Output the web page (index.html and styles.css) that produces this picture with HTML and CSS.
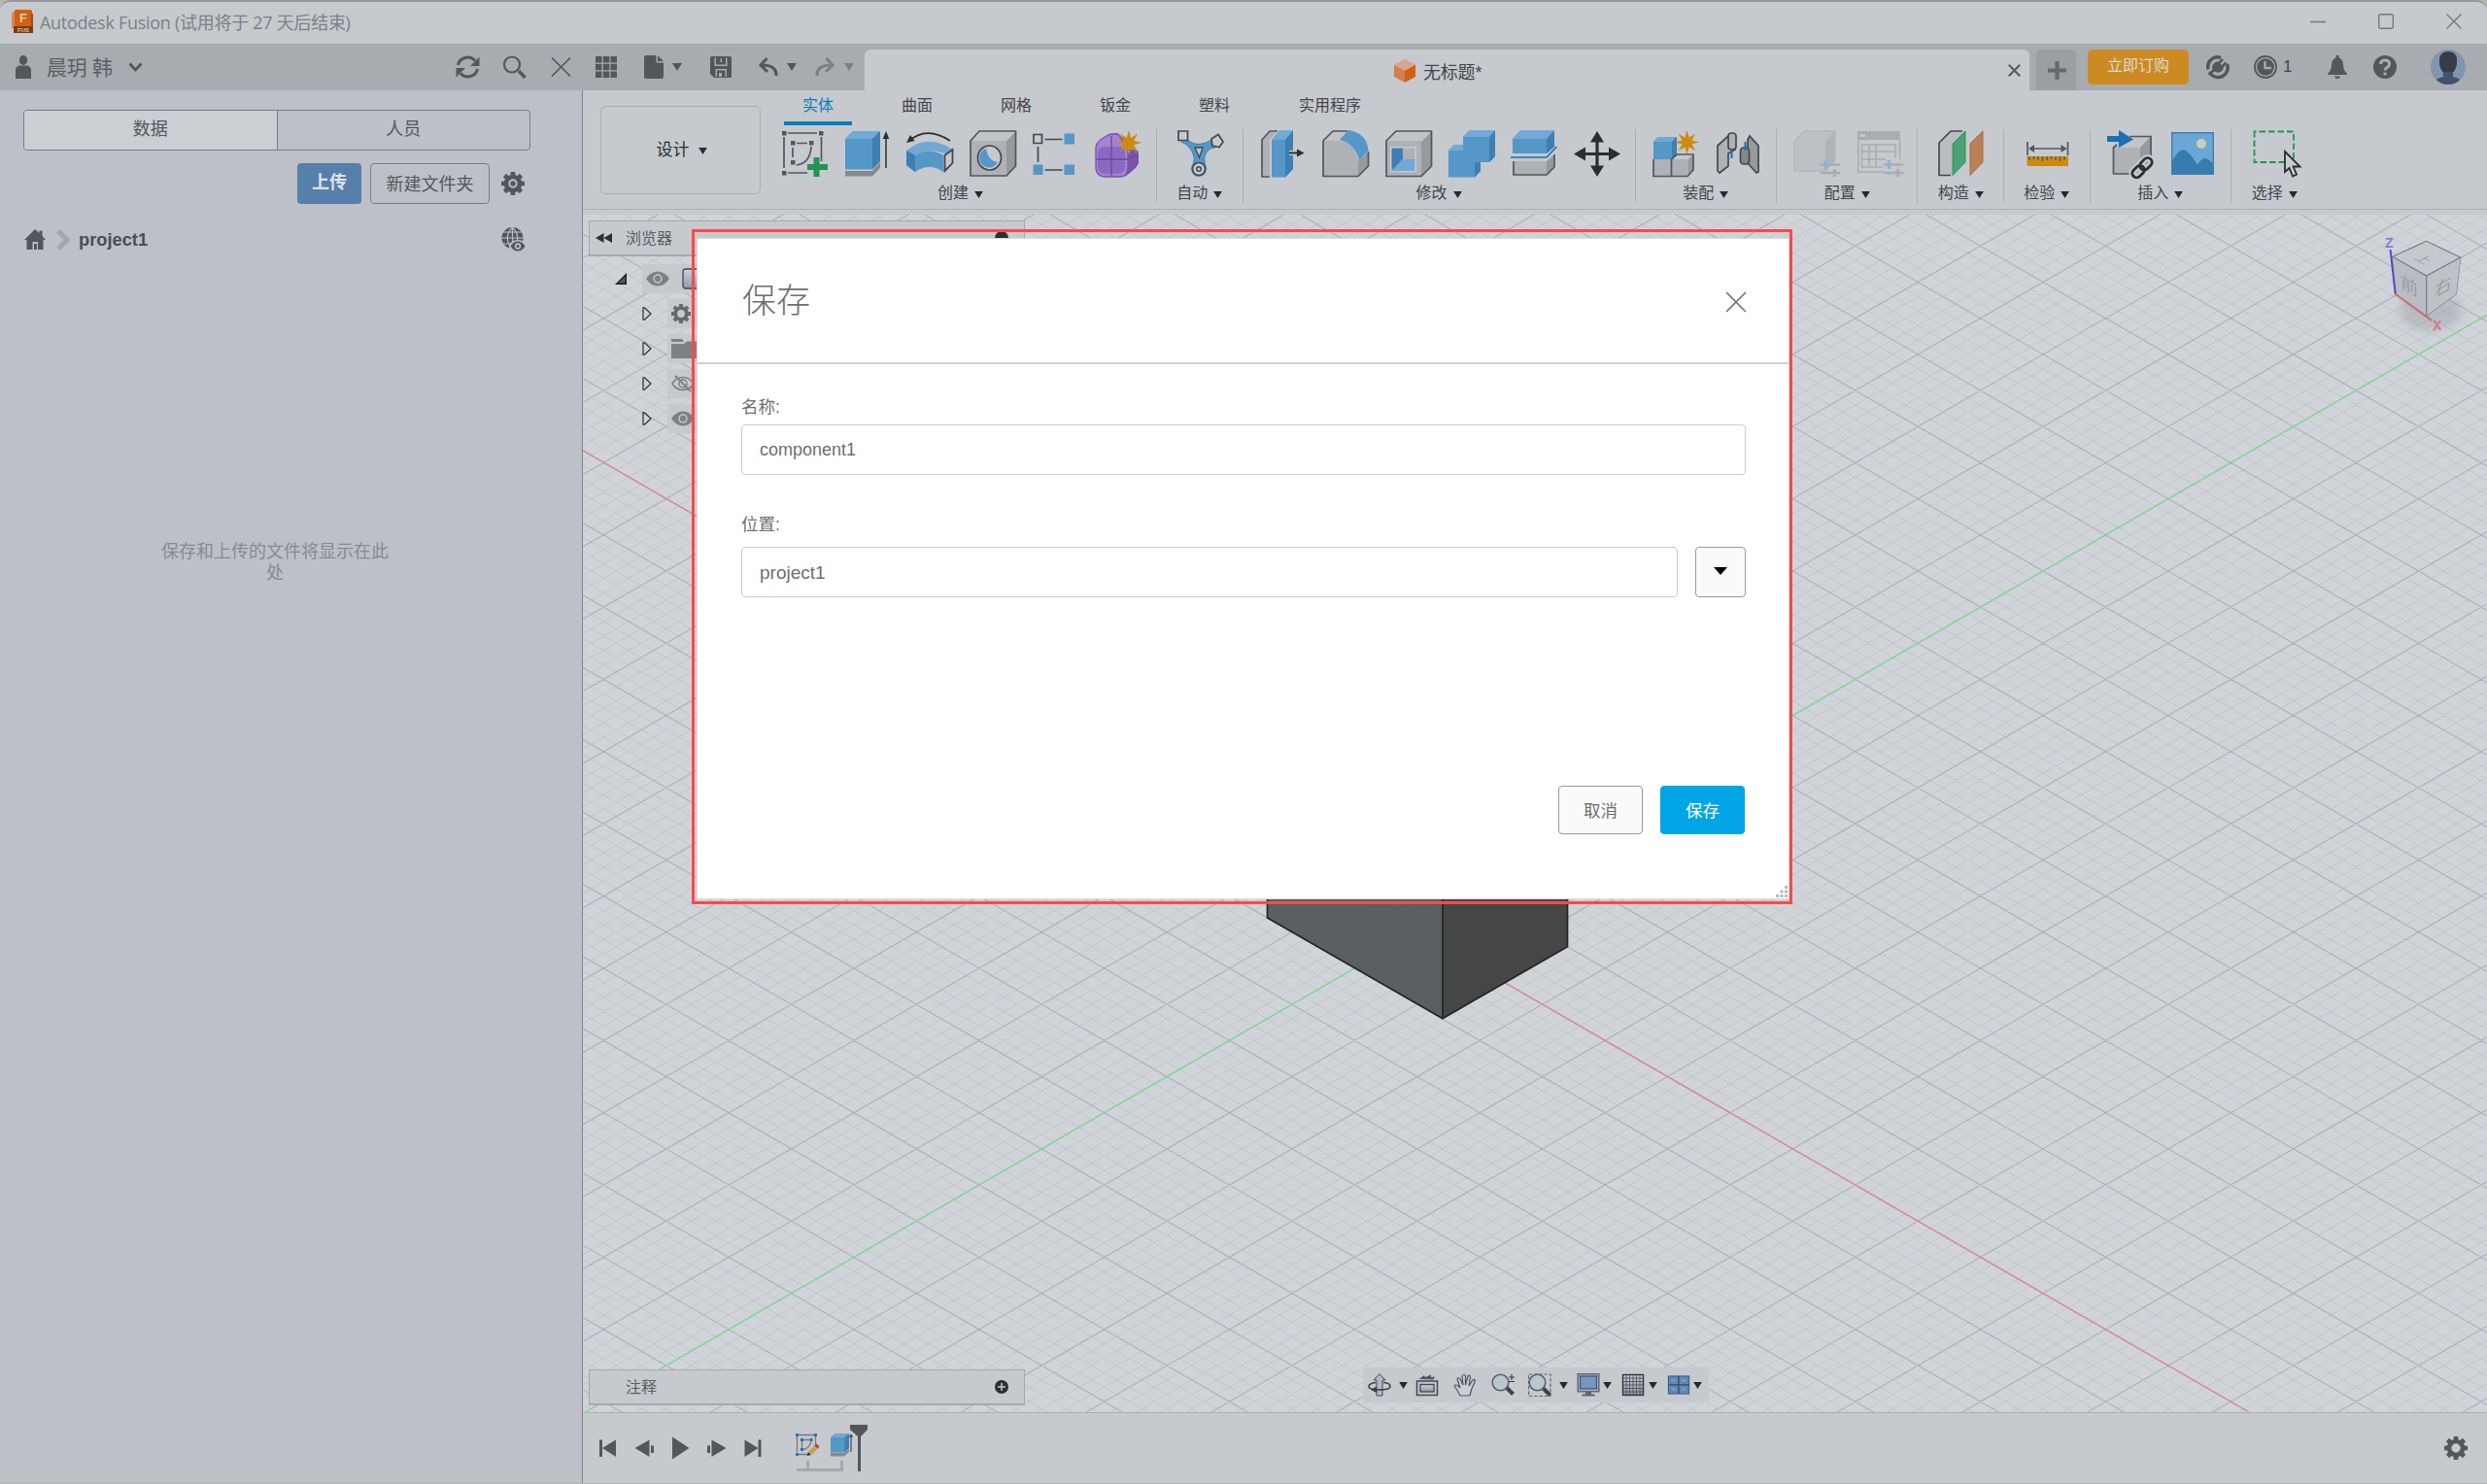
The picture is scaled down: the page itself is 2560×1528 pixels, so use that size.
FILE: index.html
```
<!DOCTYPE html>
<html lang="zh-CN">
<head>
<meta charset="utf-8">
<title>Autodesk Fusion</title>
<link rel="stylesheet" href="styles.css">
</head>
<body>
<svg class="defs" aria-hidden="true">
  <defs>
    <linearGradient id="metal" x1="0" y1="0" x2="0" y2="1"><stop offset="0" stop-color="#ccd2da"/><stop offset="1" stop-color="#8e99a8"/></linearGradient>
    <linearGradient id="steel" x1="0" y1="0" x2="0" y2="1"><stop offset="0" stop-color="#47494c"/><stop offset=".4" stop-color="#464646"/></linearGradient>
    <linearGradient id="face" x1="1" y1="0" x2="0" y2="1"><stop offset="0" stop-color="#5c635f"/><stop offset=".5" stop-color="#595f62"/></linearGradient>
    <linearGradient id="sky" x1="0" y1="0" x2="0" y2="1"><stop offset="0" stop-color="#8494ad"/><stop offset="1" stop-color="#8094b4"/></linearGradient>
    <symbol id="gear" viewBox="0 0 24 24"><circle cx="12" cy="12" r="7" fill="none" stroke="currentColor" stroke-width="4.600"/><path d="M12 0V5M12 19V24M0 12H5M19 12H24M3.500 3.500L7 7M17 17L20.500 20.500M3.500 20.500L7 17M17 7L20.500 3.500" stroke="currentColor" stroke-width="4.600"/></symbol>
    <symbol id="eye" viewBox="0 0 24 18"><path d="M0 9Q5 1.500 12 1.500T24 9Q19 16.500 12 16.500T0 9Z" fill="currentColor"/><circle cx="12" cy="9" r="4.700" fill="#c6c9ce"/><circle cx="12" cy="9" r="3.200" fill="currentColor"/></symbol>
    <symbol id="down" viewBox="0 0 10 8"><path d="M0 0H10L5 8Z" fill="currentColor"/></symbol>
    <symbol id="open" viewBox="0 0 10 14"><path d="M1 .8V13.200H2.500L9 7 2.500 .8Z" fill="none" stroke="#2b2e32" stroke-width="1.200"/></symbol>
    <symbol id="plus" viewBox="0 0 14 14"><circle cx="7" cy="7" r="7" fill="#2c3035"/><path d="M7 3V11M3 7H11" stroke="#c6c9ce" stroke-width="1.600"/></symbol>
    <symbol id="dot" viewBox="0 0 14 14"><circle cx="7" cy="7" r="7" fill="#2c3035"/></symbol>
    <symbol id="sliders" viewBox="0 0 21 17"><path d="M0 4.500H21M0 13H21" stroke="#a9adb2" stroke-width="2.400"/><path d="M6 0V9" stroke="#8fb3cf" stroke-width="3.400"/><path d="M15 9V17" stroke="#a9adb2" stroke-width="3.400"/></symbol>
    <symbol id="star" viewBox="0 0 24 24"><path d="M12 0L14 7.200 20.500 3.500 16.800 10 24 12 16.800 14 20.500 20.500 14 16.800 12 24 10 16.800 3.500 20.500 7.200 14 0 12 7.200 10 3.500 3.500 10 7.200Z" fill="#cd8b10"/></symbol>
    <symbol id="extrude" viewBox="0 0 48 48"><path d="M1 42H29L37 33V39L29 47.500H1Z" fill="#85898e"/><path d="M1 9L9 1H31V32L24 40H1Z" fill="#5597c7"/><path d="M1 9L9 1H31L24 9Z" fill="#72a8d5"/><path d="M24 9L31 1V32L24 40Z" fill="#3d7fb2"/><path d="M36 4V39" stroke="#2a2d31" stroke-width="1.500"/><path d="M36 1L32.500 9H39.500Z" fill="#2a2d31"/></symbol>
  </defs>
</svg>

<div class="window">
  <header class="titlebar">
    <svg class="logo" viewBox="0 0 22 24"><path d="M0 4L4 0V20L0 19Z" fill="#d58a55"/><rect x="3" width="18" height="17" rx="2" fill="#d15f10"/><path d="M2 17H22V24H2Z" fill="#7c3a14"/><path d="M20 4H22V17H20Z" fill="#a04a12"/><text x="8" y="13" class="logo-f">F</text><text x="6" y="22.500" class="logo-s">FUS</text></svg>
    <span class="title">Autodesk Fusion (试用将于 27 天后结束)</span>
    <div class="winbtns">
      <svg viewBox="0 0 16 16"><path d="M0 8.500H16"/></svg>
      <svg viewBox="0 0 16 16"><rect x=".7" y=".7" width="14.600" height="14.600" rx="1.500"/></svg>
      <svg viewBox="0 0 16 16"><path d="M.5 .5L15.500 15.500M15.500 .5L.5 15.500"/></svg>
    </div>
  </header>

  <div class="topbar">
    <div class="user">
      <svg width="16" height="24" viewBox="0 0 16 24"><ellipse cx="8" cy="5" rx="4.200" ry="5" fill="#53565b"/><path d="M0 24V16Q0 10.500 5 10.500H11Q16 10.500 16 16V24Z" fill="#53565b"/></svg>
      <span class="name">晨玥 韩</span>
      <svg width="15" height="10" viewBox="0 0 15 10"><path d="M1.500 1.500L7.500 8 13.500 1.500" fill="none" stroke="#53565b" stroke-width="2.800"/></svg>
    </div>
    <div class="panel-tools">
      <svg viewBox="0 0 25 24"><path d="M2.500 10A10 9.500 0 0 1 20 5.500M22.500 14A10 9.500 0 0 1 5 18.500" fill="none" stroke="#53565b" stroke-width="3"/><path d="M24.500 1.500V11H15ZM.5 22.500V13H10Z" fill="#53565b"/></svg>
      <svg viewBox="0 0 25 24"><circle cx="10" cy="9.500" r="8" fill="none" stroke="#53565b" stroke-width="2.200"/><path d="M17 16L23.500 23" stroke="#53565b" stroke-width="3.400"/></svg>
      <svg viewBox="0 0 25 24"><path d="M3 2.500L22 21.500M22 2.500L3 21.500" stroke="#53565b" stroke-width="1.700"/></svg>
    </div>
    <div class="quick">
      <svg width="22" height="22" viewBox="0 0 22 22"><path d="M0 0H6.500V6.500H0ZM7.800 0H14.300V6.500H7.800ZM15.500 0H22V6.500H15.500ZM0 7.800H6.500V14.300H0ZM7.800 7.800H14.300V14.300H7.800ZM15.500 7.800H22V14.300H15.500ZM0 15.500H6.500V22H0ZM7.800 15.500H14.300V22H7.800ZM15.500 15.500H22V22H15.500Z" fill="#53565b"/></svg>
      <svg width="20" height="24" viewBox="0 0 20 24"><path d="M0 2Q0 0 2 0H12.500V7.500H20V22Q20 24 18 24H2Q0 24 0 22ZM14 0L20 6H14Z" fill="#53565b"/></svg>
      <svg width="10" height="8" class="dk"><use href="#down"/></svg>
      <svg width="22" height="22" viewBox="0 0 22 22"><path d="M0 1.500Q0 0 1.500 0H20.500Q22 0 22 1.500V20.500Q22 22 20.500 22H4L0 18Z" fill="#53565b"/><path d="M4.500 1.500H6V8.500H16V1.500H17.500V10H4.500ZM10.500 2H12V6H10.500ZM5.500 13H17V21H15.500V14.500H7V21H5.500ZM9 17H12V21H9Z" fill="#a8abb0"/></svg>
      <svg width="20" height="20" viewBox="0 0 20 20"><path d="M18 19Q18.500 8 3 8" fill="none" stroke="#53565b" stroke-width="3.200"/><path d="M8.500 1L2 8L9 15" fill="none" stroke="#53565b" stroke-width="3"/></svg>
      <svg width="10" height="8" class="dk"><use href="#down"/></svg>
      <svg width="20" height="20" viewBox="0 0 20 20"><path d="M2 19Q1.500 8 17 8" fill="none" stroke="#7c8085" stroke-width="3.200"/><path d="M11.500 1L18 8L11 15" fill="none" stroke="#7c8085" stroke-width="3"/></svg>
      <svg width="10" height="8" class="lt"><use href="#down"/></svg>
    </div>
    <div class="doctab">
      <div class="doc"><svg width="22" height="24" viewBox="0 0 22 24"><path d="M0 5.500L11 11.500V24L0 18Z" fill="#d27f4a"/><path d="M22 5.500L11 11.500V24L22 18Z" fill="#d15f10"/><path d="M11 0L22 5.500 11 11.500 0 5.500Z" fill="#d3a88f"/></svg><span>无标题*</span></div>
      <svg width="13" height="13" viewBox="0 0 13 13"><path d="M.8 .8L12.200 12.200M12.200 .8L.8 12.200" stroke="#5a5d62" stroke-width="2.300"/></svg>
    </div>
    <div class="newtab"><svg width="19" height="19" viewBox="0 0 19 19"><path d="M9.500 0V19M0 9.500H19" stroke="#65686d" stroke-width="4.200"/></svg></div>
    <div class="order">立即订购</div>
    <div class="status">
      <svg viewBox="0 0 24 24"><path d="M15 2.500A10 10 0 0 0 2 14.500M4.500 19A10 10 0 0 0 21.500 9" fill="none" stroke="#53565b" stroke-width="3.400"/><path d="M7 9.500Q10 5 13.500 7.500L17 11Q19 15 14.500 17 11.500 18.500 8.500 16.500L3.500 21 1.500 18.500 6.500 14.500Q5.500 12 7 9.500Z" fill="#53565b"/><path d="M12.500 8.500L17 4M16 12L20.500 7.500" stroke="#53565b" stroke-width="2.600"/></svg>
      <svg viewBox="0 0 24 24"><circle cx="12" cy="12" r="11" fill="none" stroke="#53565b" stroke-width="1.800"/><circle cx="12" cy="12" r="8.800" fill="#53565b"/><path d="M11.500 6V13H18" fill="none" stroke="#a8abb0" stroke-width="2.300"/></svg>
      <span>1</span>
      <svg viewBox="0 0 24 24"><path d="M10.500 0H13.500V2.500Q18 4 18 10 18 15 22 19V20H2V19Q6 15 6 10 6 4 10.500 2.500ZM9 21.500H15Q14.500 24 12 24T9 21.500Z" fill="#53565b"/></svg>
      <svg viewBox="0 0 24 24"><circle cx="12" cy="12" r="12" fill="#53565b"/><path d="M7.500 9Q7.500 5 12 5T16.500 9Q16.500 11 14 12.500 12 13.800 12 15.500" fill="none" stroke="#a8abb0" stroke-width="3"/><path d="M10.500 17.500H13.500V20.500H10.500Z" fill="#a8abb0"/></svg>
      <svg class="avatar" viewBox="0 0 36 36"><clipPath id="av"><circle cx="18" cy="18" r="18"/></clipPath><g clip-path="url(#av)"><rect width="36" height="36" fill="url(#sky)"/><path d="M9 12Q9 2 18 2T27 12Q27 19 23 24V28Q32 30 34 36H2Q4 30 13 28V24Q9 19 9 12Z" fill="#43516a"/><path d="M9 12Q9 2 18 2T27 12Q27 19 23 23H13Q9 19 9 12Z" fill="#373d48"/></g></svg>
    </div>
  </div>

  <main class="main">
    <aside class="side">
      <div class="seg"><div class="on">数据</div><div>人员</div></div>
      <div class="actions">
        <div class="upload">上传</div><div class="newfolder">新建文件夹</div>
        <svg width="24" height="24" class="dk"><use href="#gear"/><circle cx="12" cy="12" r="2.700" fill="#53565b"/></svg>
      </div>
      <div class="crumb">
        <svg width="22" height="21" viewBox="0 0 22 21"><path d="M11 0L15.500 4V1.500H18.500V7L22 11H19.500V21H14V13H8.500V21H2.500V11H0Z" fill="#53565b"/><path d="M10 15H13V21H10Z" fill="#53565b"/></svg>
        <svg width="15" height="20" viewBox="0 0 15 20"><path d="M2 1L11 10 2 19" fill="none" stroke="#a2a6ab" stroke-width="5"/></svg>
        <b>project1</b>
        <svg class="globe" width="25" height="25" viewBox="0 0 25 25"><circle cx="11.500" cy="11" r="11" fill="#53565b"/><path d="M0 11H23M2 5H21M2 17H21M11.500 0V22M11.500 0Q1 11 11.500 22Q22 11 11.500 0" fill="none" stroke="#bdc0c6" stroke-width="1.100"/><ellipse cx="17" cy="19.500" rx="9" ry="6.500" fill="#bdc0c6"/><path d="M9.500 19.500Q12.500 14.500 17 14.500T24.500 19.500Q21.500 24.500 17 24.500T9.500 19.500Z" fill="#53565b"/><circle cx="17" cy="19.500" r="3.200" fill="#bdc0c6"/><circle cx="17" cy="19.500" r="1.600" fill="#53565b"/></svg>
      </div>
      <p class="empty">保存和上传的文件将显示在此<br>处</p>
    </aside>

    <section class="work">
      <div class="ribbon">
        <div class="design">设计<svg width="10" height="8"><use href="#down"/></svg></div>
        <div class="ribbon-body">
          <nav class="tabs"><span class="active">实体</span><span>曲面</span><span>网格</span><span>钣金</span><span>塑料</span><span class="wide">实用程序</span></nav>
          <div class="groups">
            <div class="group g6">
              <div class="icons">
                <svg viewBox="0 0 48 48"><path d="M3 7V39M7 3H37M41.500 7V32M7 44H27M12 18V28M16 13.500H27M31 17Q30 34 16 36" fill="none" stroke="#53565b" stroke-width="1.700"/><path d="M1 1H5.500V5.500H1ZM39 1H43.500V5.500H39ZM1 42H5.500V46.500H1ZM10 11H14.500V15.500H10ZM29 11H33.500V15.500H29ZM10 31H14.500V35.500H10Z" fill="#53565b"/><path d="M36.500 28V48M27 38H48" stroke="#219452" stroke-width="6"/></svg>
                <svg viewBox="0 0 48 48"><path d="M1 42H29L37 33V39L29 47.500H1Z" fill="#85898e"/><path d="M1 9L9 1H37V32L29 40.500H1Z" fill="#5597c7"/><path d="M1 9L9 1H37L29 9Z" fill="#72a8d5"/><path d="M29 9L37 1V32L29 40.500Z" fill="#3d7fb2"/><path d="M43 5V39" stroke="#2a2d31" stroke-width="1.500"/><path d="M43 1L39.700 9H46.300Z" fill="#2a2d31"/></svg>
                <svg viewBox="0 0 48 48"><path d="M2 12Q20-5 45 11" fill="none" stroke="#2a2d31" stroke-width="1.700"/><path d="M0 13L4 5 8.500 11Z" fill="#2a2d31"/><path d="M0 21Q22 3 48 20L41 25Q24 17 9 26Z" fill="#72a8d5"/><path d="M0 21L9 26Q24 17 38 26V43Q24 33 9 43L0 36Z" fill="#5597c7"/><path d="M0 21L9 26V43L0 36Z" fill="#3d7fb2"/><path d="M39.500 26L47.500 20V34L39.500 42Z" fill="#c6c9ce" stroke="#44474c" stroke-width="1.800"/></svg>
                <svg viewBox="0 0 48 48"><path d="M1 11L10 1H48L38 11Z" fill="#c2c4c8"/><path d="M38 11L48 1V37L38 47Z" fill="#96999e"/><path d="M1 11H38V47H1Z" fill="#aeb1b5"/><path d="M1 11L10 1H47.500V37L38 47H1Z" fill="none" stroke="#53565b" stroke-width="1.700"/><ellipse cx="20.500" cy="28.500" rx="12" ry="12.500" fill="#c6c9ce" stroke="#44474c" stroke-width="1.700"/><path d="M17 19A10 10 0 1 0 29 33Q19 32 17 19Z" fill="#5597c7"/></svg>
                <svg viewBox="0 0 48 48"><path d="M1 4.500H9.500V13.500H1Z" fill="none" stroke="#44474c" stroke-width="1.700"/><path d="M32.500 3.500H43V14.500H32.500ZM.5 35.500H10.500V46H.5ZM32.500 35.500H43V46H32.500Z" fill="#5597c7"/><path d="M12.500 9.500H30.500M12.500 41H30.500M5.500 17V33" stroke="#44474c" stroke-width="1.700"/></svg>
                <svg viewBox="0 0 48 48"><path d="M1 17Q2 11 12 6 16 3 24 4L44 22V32Q42 40 34 46 32 48 26 48H12Q1 48 1 38Z" fill="#a483d2"/><path d="M34 20L45 24V34Q42 41 34 44Z" fill="#7a55ad"/><rect x="3" y="17" width="28" height="28" rx="7" fill="#8b68c3"/><path d="M17 6V47M1 30H34L44 25" fill="none" stroke="#6a4a9a" stroke-width="1.300"/><path d="M1 17Q2 11 12 6 16 3 24 4L34 18V38Q34 48 26 48H12Q1 48 1 38ZM34 20L44 22V32Q42 40 30 47" fill="none" stroke="#7751a8" stroke-width="1.300"/><use href="#star" x="22" y="0" width="26" height="26"/></svg>
              </div>
              <div class="label">创建<svg><use href="#down"/></svg></div>
            </div>
            <div class="group g1">
              <div class="icons">
                <svg viewBox="0 0 48 48"><path d="M4 10H11Q14 14 22 14.500 30 14 35 10L39 18Q31 18 28 27 27 31 30 40H14Q18 32 17 27 14 16 4 12Z" fill="#5597c7" stroke="#3d7fb2" stroke-width="1"/><path d="M18 18H26L22.500 28Z" fill="#c6c9ce" stroke="#44474c" stroke-width="1.300"/><circle cx="22" cy="40" r="8" fill="#5597c7"/><circle cx="22" cy="40" r="6.500" fill="#c6c9ce" stroke="#44474c" stroke-width="1.600"/><circle cx="22" cy="40" r="2.300" fill="none" stroke="#44474c" stroke-width="1.500"/><path d="M1 1H10.500V10.500H1Z" fill="#c6c9ce" stroke="#44474c" stroke-width="1.700"/><path d="M35 9L42 4.500 47 12 43 17.500 36 16Z" fill="#c6c9ce" stroke="#44474c" stroke-width="1.700"/></svg>
              </div>
              <div class="label">自动<svg><use href="#down"/></svg></div>
            </div>
            <div class="group g6">
              <div class="icons">
                <svg viewBox="0 0 48 48"><path d="M10 48H2V10L10 1H18L10 10Z" fill="#aeb1b5"/><path d="M10 48H2V10L10 1H18" fill="none" stroke="#53565b" stroke-width="1.700"/><path d="M12 10L20 .5H34V40L26 48.500H12Z" fill="#5597c7"/><path d="M12 10L20 .5H34L26 10Z" fill="#72a8d5"/><path d="M26 10L34 .5V40L26 48.500Z" fill="#3d7fb2"/><path d="M30 23.500H40" stroke="#c6c9ce" stroke-width="5"/><path d="M30 23.500H42" stroke="#2a2d31" stroke-width="1.800"/><path d="M38 19.500L45.500 23.500 38 27.500Z" fill="#2a2d31"/></svg>
                <svg viewBox="0 0 48 48"><path d="M1 11L11 1H26L18 11Z" fill="#c2c4c8"/><path d="M1 11H16Q34 12 37 32V47H1Z" fill="#aeb1b5"/><path d="M37 32L47.500 22V37L37 47Z" fill="#96999e"/><path d="M26 1H11L1 11V47.500H37L47.500 37V22" fill="none" stroke="#53565b" stroke-width="1.700"/><path d="M18 10L27 0Q46 3 47.500 21L38 31Q34 14 18 10Z" fill="#5597c7"/></svg>
                <svg viewBox="0 0 48 48"><path d="M1 11L11 1H48L37 12Z" fill="#c2c4c8"/><path d="M37 12L48 1V37L37 47Z" fill="#96999e"/><path d="M1 11H37V47H1Z" fill="#aeb1b5"/><path d="M1 11L11 1H47.500V37L37 47.500H1Z" fill="none" stroke="#53565b" stroke-width="1.700"/><path d="M5 17H32V43H5Z" fill="#c9ccd0"/><path d="M6.500 18.500H18V30L6.500 42Z" fill="#3d7fb2"/><path d="M6.500 42L18 30H30.500V42Z" fill="#72a8d5"/><path d="M18 18.500H30.500V30H18Z" fill="#aeb1b5"/></svg>
                <svg viewBox="0 0 48 48"><path d="M0 21L6 15H15V7L21 .5H48V27L42 33H33V42L27 48.500H0Z" fill="#5597c7"/><path d="M15 7L21 .5H48L42 7ZM0 21L6 15H15V21Z" fill="#72a8d5"/><path d="M42 7L48 .5V27L42 33ZM27 33H33V42L27 48.500Z" fill="#3d7fb2"/></svg>
                <svg viewBox="0 0 48 48"><path d="M2 9L10 .5H45V17L37 24H2Z" fill="#5597c7"/><path d="M2 9L10 .5H45L37 9Z" fill="#72a8d5"/><path d="M37 9L45 .5V17L37 24Z" fill="#3d7fb2"/><path d="M0 28H37L47.500 17" fill="none" stroke="#1d6fb5" stroke-width="1.600"/><path d="M3 32H37V46H3Z" fill="#aeb1b5"/><path d="M37 32L45 25V38L37 46Z" fill="#96999e"/><path d="M3 32V46H37L45 38V25" fill="none" stroke="#53565b" stroke-width="1.700"/></svg>
                <svg viewBox="0 0 48 48"><path d="M24 8V41M8 24.500H40" stroke="#2a2d31" stroke-width="3.200"/><path d="M24 1L31 12.500H17ZM24 48L31 36.500H17ZM0 24.500L12 17.500V31.500ZM48 24.500L36 17.500V31.500Z" fill="#2a2d31"/></svg>
              </div>
              <div class="label">修改<svg><use href="#down"/></svg></div>
            </div>
            <div class="group g2">
              <div class="icons">
                <svg viewBox="0 0 48 48"><path d="M1 12L6 7H25V24L19 30H1Z" fill="#5597c7"/><path d="M1 12L6 7H25L20 12Z" fill="#72a8d5"/><path d="M20 12L25 7V24L20 29Z" fill="#3d7fb2"/><path d="M1 30H19V47H1ZM20 30H37V47H20Z" fill="#aeb1b5"/><path d="M37 30L42 25V41L37 47Z" fill="#96999e"/><path d="M1 30V47.500H36L42 41V25H25L19.500 30V47" fill="none" stroke="#53565b" stroke-width="1.700"/><use href="#star" x="23" y="0" width="25" height="25"/></svg>
                <svg viewBox="0 0 48 48"><path d="M3 16L14 6 21 9V20L14 24V37L5 44 3 42Z" fill="#aeb1b5" stroke="#44474c" stroke-width="1.700"/><path d="M14 6Q14 3 18 3T22 6V17Q22 20 18 20T14 17Z" fill="#aeb1b5" stroke="#44474c" stroke-width="1.700"/><path d="M17.500 21V29" stroke="#1d6fb5" stroke-width="2"/><path d="M34 10L36 6 45 16V43L43 44 34 34Z" fill="#96999e" stroke="#44474c" stroke-width="1.700"/><rect x="26.500" y="18" width="9" height="17" rx="3.500" fill="#85898e" stroke="#44474c" stroke-width="1.700"/><path d="M31.500 12V21" stroke="#1d6fb5" stroke-width="2"/></svg>
              </div>
              <div class="label">装配<svg><use href="#down"/></svg></div>
            </div>
            <div class="group g2">
              <div class="icons">
                <svg viewBox="0 0 48 48"><path d="M1 12L11 1H43V30L33 42H1Z" fill="#bdc0c5" stroke="#b3b6bb" stroke-width="1.500"/><path d="M33 11L43 1V32L33 42Z" fill="#b0b3b8"/><use href="#sliders" x="27.500" y="31" width="21" height="17"/></svg>
                <svg viewBox="0 0 48 48"><path d="M1 1H45V10H1Z" fill="#a9adb2"/><path d="M3.500 4H9V7H3.500Z" fill="#c6c9ce"/><path d="M1.700 10V43H27M44.500 10V30M5.500 15H40V28M5.500 15V38H27M5.500 22H40M5.500 30H30M13 15V38M20 15V38" fill="none" stroke="#a9adb2" stroke-width="1.600"/><use href="#sliders" x="27.500" y="31" width="21" height="17"/></svg>
              </div>
              <div class="label">配置<svg><use href="#down"/></svg></div>
            </div>
            <div class="group g1">
              <div class="icons">
                <svg viewBox="0 0 48 48"><path d="M1 13L13 1H26L14 14V46H1Z" fill="#b9bcc1"/><path d="M25 1H13L1 13V46.500H13" fill="none" stroke="#44474c" stroke-width="1.700"/><path d="M15 14L28 1V33L15 46.500Z" fill="#4ba273" stroke="#219452" stroke-width="1"/><path d="M33 14L46 1V33L33 46.500Z" fill="#ba8059" stroke="#b5693a" stroke-width="1"/></svg>
              </div>
              <div class="label">构造<svg><use href="#down"/></svg></div>
            </div>
            <div class="group g1">
              <div class="icons">
                <svg viewBox="0 0 48 48"><path d="M3 12V26M44.500 12V26" stroke="#53565b" stroke-width="1.700"/><path d="M6 19H42" stroke="#53565b" stroke-width="1.700"/><path d="M4 19L10 15V23ZM43.500 19L37.500 15V23Z" fill="#53565b"/><path d="M2.500 27H45V37H2.500Z" fill="#cd8b10"/><path d="M5 27V31M9.500 27V30M14 27V31M18.500 27V32M23 27V31M27.500 27V30M32 27V31M36.500 27V32M41 27V31" stroke="#53565b" stroke-width="1.400"/></svg>
              </div>
              <div class="label">检验<svg><use href="#down"/></svg></div>
            </div>
            <div class="group g2">
              <div class="icons">
                <svg viewBox="0 0 48 48"><path d="M6.500 16L17 6H45L34 18H6.500Z" fill="#c2c4c8"/><path d="M6.500 18H34V45H6.500Z" fill="#aeb1b5"/><path d="M34 18L45 6V34L34 45Z" fill="#96999e"/><path d="M23 6.500H45V28M26 45H6.500V18L10 15" fill="none" stroke="#53565b" stroke-width="1.700"/><path d="M0 6H12V0L27 9.500 12 18V12H0Z" fill="#1d6fb5"/><g transform="rotate(-45 36 38)" fill="none" stroke="#c6c9ce" stroke-width="7"><rect x="23" y="34" width="14" height="9" rx="4.500"/><rect x="34" y="34" width="14" height="9" rx="4.500"/></g><g transform="rotate(-45 36 38)" fill="none" stroke="#2a2d31" stroke-width="2.800"><rect x="23" y="34" width="14" height="9" rx="4.500"/><rect x="34" y="34" width="14" height="9" rx="4.500"/></g></svg>
                <svg viewBox="0 0 48 48"><path d="M2.700 2.700H45.300V45.300H2.700Z" fill="#6ba6d7"/><path d="M2.700 32Q10 19 15 20.500 20 21 29 36 33 29 37 29 41 30 45.300 35V45.300H2.700Z" fill="#367cae"/><circle cx="33" cy="14" r="5" fill="#ccceb0"/><path d="M2.700 2.700H45.300V45.300H2.700Z" fill="none" stroke="#3d7fb2" stroke-width="1.400"/></svg>
              </div>
              <div class="label">插入<svg><use href="#down"/></svg></div>
            </div>
            <div class="group g1 last">
              <div class="icons">
                <svg viewBox="0 0 48 48"><path d="M1.500 6V1.500H42V33H1.500V6" fill="none" stroke="#219452" stroke-width="1.800" stroke-dasharray="6.500 3"/><path d="M33 22V43L37.500 39 41 47.500 45 45.500 41.500 37.500H48.500Z" fill="#c9ccd1" stroke="#2a2d31" stroke-width="1.800"/></svg>
              </div>
              <div class="label">选择<svg><use href="#down"/></svg></div>
            </div>
          </div>
        </div>
      </div>

      <div class="canvas">
        <svg class="scene" viewBox="0 0 1960 1233">
          <g id="grid"></g>
          <path d="M0 242.800L1713.200 1232" stroke="#d98a8e" stroke-width="1.400"/>
          <path d="M0 1234.500L1960 103.200" stroke="#88d692" stroke-width="1.400"/>
          <path d="M704.500 560H885V827.700L704.500 724Z" fill="url(#face)"/>
          <path d="M885 560H1013.500V753.700L885 827.700Z" fill="url(#steel)"/>
          <path d="M704.500 560V724L885 827.700 1013.500 753.700V560M885 560V827.700" fill="none" stroke="#222426" stroke-width="1.700"/>
        </svg>

        <svg class="viewcube" viewBox="0 0 90 110">
          <ellipse cx="52" cy="80" rx="32" ry="20" class="cube-shadow"/>
          <path d="M47.700 8.300L12.700 24.300 15.700 62.700 47.700 85 78.300 62.700 82.700 25Z" fill="#c5c8cd" stroke="#777a80" stroke-width="1.200"/>
          <path d="M12.700 24.300L47.700 44V85L15.700 62.700Z" fill="#b9bcc2"/><path d="M82.700 25L47.700 44V85L78.300 62.700Z" fill="#bec1c6"/>
          <path d="M12.700 24.300L47.700 44 82.700 25M47.700 44V85" fill="none" stroke="#777a80" stroke-width="1.200"/>
          <path d="M10.500 17L15.700 62.700" stroke="#4b4cc4" stroke-width="2"/><path d="M15.700 62.700L53 90" stroke="#cf6a70" stroke-width="2"/>
          <text class="cz" x="5" y="15">Z</text><text class="cx" x="54" y="100">X</text>
          <text class="cf" transform="matrix(.95 .5 .08 .95 21.500 56)">前</text><text class="cf" transform="matrix(.95 -.55 -.08 .95 55 67)">右</text><text class="cf" transform="matrix(.65 .35 -.65 .35 34 26)">上</text>
        </svg>

        <div class="pane browser"><svg width="17" height="10" viewBox="0 0 17 10"><path d="M8.500 0V10L0 5ZM17 0V10L8.500 5Z" fill="#2c3035"/></svg><span>浏览器</span><svg class="add" width="14" height="14"><use href="#dot"/></svg></div>
        <div class="tree">
          <div class="row root"><svg width="11" height="11" viewBox="0 0 11 11"><path d="M10.300 .7V10.300H.7Z" fill="#55585c" stroke="#1c1e20" stroke-width="1.400"/></svg><div class="cell"><svg width="24" height="18"><use href="#eye"/></svg></div><div class="cell"><svg width="24" height="24" viewBox="0 0 24 24"><rect x="1" y="2" width="20" height="20" rx="2.500" fill="url(#metal)" stroke="#44474c" stroke-width="1.300"/></svg></div></div>
          <div class="row"><svg width="10" height="14"><use href="#open"/></svg><div class="cell gearcell"><svg width="20" height="20"><use href="#gear"/></svg></div></div>
          <div class="row"><svg width="10" height="14"><use href="#open"/></svg><div class="cell"><svg width="26" height="20" viewBox="0 0 26 20"><path d="M0 0H11L13 3H0ZM0 5H13L16 2.500H26V20H0Z" fill="currentColor"/></svg></div></div>
          <div class="row"><svg width="10" height="14"><use href="#open"/></svg><div class="cell"><svg width="24" height="18" viewBox="0 0 24 18"><path d="M1 9Q5 2.500 12 2.500T23 9Q19 15.500 12 15.500T1 9Z" fill="none" stroke="currentColor" stroke-width="1.500"/><circle cx="12" cy="9" r="4" fill="none" stroke="currentColor" stroke-width="1.500"/><path d="M4 1L20 17" stroke="currentColor" stroke-width="1.800"/></svg></div></div>
          <div class="row"><svg width="10" height="14"><use href="#open"/></svg><div class="cell"><svg width="24" height="18"><use href="#eye"/></svg></div></div>
        </div>

        <div class="pane notes"><span>注释</span><svg class="add" width="14" height="14"><use href="#plus"/></svg></div>

        <div class="navbar">
          <svg viewBox="0 0 24 24"><path d="M9 7H6L12 .8 18 7H15V23H9Z" fill="#b4bac3" stroke="#44474c" stroke-width="1"/><path d="M8 9.500Q1 10.500 1 13.500 1 17 12 17T23 13.500Q23 10 16 9.500" fill="none" stroke="#3a3d42" stroke-width="1.600"/><path d="M3 17L9 13.500V20Z" fill="#3a3d42"/></svg>
          <svg class="c" viewBox="0 0 10 8"><use href="#down"/></svg>
          <svg viewBox="0 0 24 24"><path d="M3.500 6L9 2 10 4 16 1.500V4L20 3.500 18.500 6.500Z" fill="#54585e"/><rect x="1.500" y="8" width="21" height="14.500" fill="#c3c7cc" stroke="#44474c" stroke-width="1.500"/><rect x="5" y="11.500" width="14" height="7.500" fill="url(#metal)" stroke="#44474c" stroke-width="1.300"/></svg>
          <svg viewBox="0 0 24 24"><path d="M7 23Q4 17 1 13 2 11 5 13L7 15 4 6Q5 3 7 6L10 12 9 3Q11 0 12.500 3V12L15 3Q17 1 17.500 4L16 13 20 7Q23 5 22 9L18.500 17 17 23Z" fill="#c9ced6" stroke="#50545b" stroke-width="1.200"/></svg>
          <svg viewBox="0 0 24 24"><path d="M15 14L22.500 21.500" stroke="#3f4247" stroke-width="4"/><circle cx="9.500" cy="9.500" r="8.300" fill="#b9c8cf" stroke="#5a5e65" stroke-width="1.500"/><path d="M21 1V7M18 4H24M18 8.500H24" stroke="#3f4247" stroke-width="1.200"/></svg>
          <svg viewBox="0 0 24 24"><path d="M.6 1H23V23.500H.6Z" fill="none" stroke="#66696e" stroke-width="1.200" stroke-dasharray="3.500 1.800"/><path d="M15 15L22.500 22.500" stroke="#3f4247" stroke-width="4"/><circle cx="9.500" cy="9.500" r="8.300" fill="#b9c8cf" stroke="#5a5e65" stroke-width="1.500"/></svg>
          <svg class="c" viewBox="0 0 10 8"><use href="#down"/></svg>
          <svg viewBox="0 0 24 24"><rect x="1.200" y=".8" width="21.600" height="18" fill="#b2b6bd" stroke="#5f636a" stroke-width="1.400"/><rect x="3.500" y="3" width="17" height="13" fill="#7596c0" stroke="#3d5478" stroke-width="1.200"/><path d="M9 19H15V21.500H18.500V23.500H5.500V21.500H9Z" fill="#5f636a"/></svg>
          <svg class="c" viewBox="0 0 10 8"><use href="#down"/></svg>
          <svg viewBox="0 0 24 24"><rect x="1.500" y="1.500" width="21" height="21" fill="url(#metal)" stroke="#2f3338" stroke-width="1.400"/><path d="M5 2V22M8.500 2V22M12 2V22M15.500 2V22M19 2V22M2 5H22M2 8.500H22M2 12H22M2 15.500H22M2 19H22" stroke="#565b63" stroke-width="1"/></svg>
          <svg class="c" viewBox="0 0 10 8"><use href="#down"/></svg>
          <svg viewBox="0 0 24 24"><rect x="1.500" y="3" width="21" height="18" fill="#7596c0" stroke="#3d5e8c" stroke-width="1.300"/><path d="M12 3V21M1.500 12H22.500" stroke="#2f4d7a" stroke-width="1.500"/><path d="M3.500 5H10V10H3.500ZM14 5H20.500V10H14ZM3.500 14H10V19H3.500ZM14 14H20.500V19H14Z" fill="none" stroke="#5578a8" stroke-width="1"/></svg>
          <svg class="c" viewBox="0 0 10 8"><use href="#down"/></svg>
        </div>

        <div class="dialog">
          <div class="sheet">
            <div class="dhead"><h1>保存</h1><svg width="22" height="22" viewBox="0 0 22 22"><path d="M1 1L21 21M21 1L1 21" stroke="#777" stroke-width="1.700"/></svg></div>
            <div class="dbody">
              <label>名称:</label>
              <div class="input">component1</div>
              <label>位置:</label>
              <div class="line"><div class="input big">project1</div><div class="drop"><svg width="14" height="8" viewBox="0 0 14 8"><path d="M0 0H14L7 8Z"/></svg></div></div>
            </div>
            <div class="dfoot"><div class="btn">取消</div><div class="btn primary">保存</div></div>
            <svg class="grip" width="12" height="12" viewBox="0 0 12 12"><path d="M9 0H12V3H9ZM4.500 4.500H7.500V7.500H4.500ZM9 4.500H12V7.500H9ZM0 9H3V12H0ZM4.500 9H7.500V12H4.500ZM9 9H12V12H9Z" fill="#b9b9b9"/></svg>
          </div>
        </div>
      </div>

      <footer class="timeline">
        <div class="play">
          <svg viewBox="0 0 20 24"><path d="M1 3.500H4V21H1ZM18 3.500V21L4 12Z"/></svg>
          <svg viewBox="0 0 20 24"><path d="M14.500 3.500V21L-.5 12ZM16 9.500H19V17H16Z"/></svg>
          <svg viewBox="0 0 20 24"><path d="M1 .5L18.500 12 1 23.500Z"/></svg>
          <svg viewBox="0 0 20 24"><path d="M3.500 3.500V21L18.500 12ZM-1 9.500H2V17H-1Z"/></svg>
          <svg viewBox="0 0 20 24"><path d="M14.500 3.500H17.500V21H14.500ZM.5 3.500V21L14.500 12Z"/></svg>
        </div>
        <svg class="history" width="76" height="50" viewBox="0 0 76 50">
          <path d="M2.500 12V28M4 10.500H20M21.500 12V22M4 30.500H13M7.500 17V24M9 15.500H15M17 16Q16 24 9 25.500" fill="none" stroke="#777b80" stroke-width="1.300"/>
          <path d="M1 9H4V12H1ZM20 9H23V12H20ZM1 29H4V32H1ZM6 14H9V17H6ZM15.500 14H18.500V17H15.500ZM6 24H9V27H6Z" fill="#1d76bd"/>
          <path d="M16 29L22 23" stroke="#d0a050" stroke-width="5"/><path d="M22 23L24 21" stroke="#c8323c" stroke-width="4.500"/><path d="M12.500 32L14 28 17 31Z" fill="#2a2d31"/>
          <path d="M37 29H51L56 25V28L51 32.500H37Z" fill="#85898e"/><path d="M37 13L41.500 9H56V24L51 28.500H37Z" fill="#5597c7"/><path d="M37 13L41.500 9H56L51.500 13Z" fill="#72a8d5"/><path d="M51.500 13L56 9V24L51.500 28.500Z" fill="#3d7fb2"/><path d="M58 11V28M56.500 13L58 10 59.500 13" fill="none" stroke="#2a2d31" stroke-width="1"/>
          <path d="M2 46.500H50M13.500 37V46M48.500 37V48" stroke="#a5a8ad" stroke-width="3" fill="none"/>
          <path d="M57 0H75V5L68 12V48H65V12L57 5Z" fill="#53565b"/>
        </svg>
        <svg width="24" height="24" class="dk set"><use href="#gear"/></svg>
      </footer>
    </section>
  </main>
</div>
<script src="grid.js"></script>
</body>
</html>
```
FILE: grid.js
```
// Isometric ground grid: two families of parallel lines, every fifth one is a major line.
(function () {
  var slope = 0.5772, step = 14.874, cx = 858.8, cy = 738.8, width = 1960;
  var minor = '', major = '';
  for (var k = -135; k <= 135; k++) {
    [slope, -slope].forEach(function (m) {
      var y0 = cy + k * step - m * cx;
      var seg = 'M0 ' + y0.toFixed(2) + 'L' + width + ' ' + (y0 + m * width).toFixed(2);
      if (k % 5 === 0) major += seg; else minor += seg;
    });
  }
  document.getElementById('grid').innerHTML =
    '<path class="minor" d="' + minor + '"/><path class="major" d="' + major + '"/>';
})();
```
FILE: styles.css
```
* { box-sizing: border-box; }
body { margin: 0; background: #b8b6b4; font-family: "Liberation Sans", "Noto Sans CJK SC", sans-serif; color: #43464b; }
svg { display: block; flex: none; overflow: visible; }
.defs { position: absolute; width: 0; height: 0; }
.dk { color: #53565b; }
.lt { color: #7c8085; }

.window { width: 2560px; height: 1528px; display: flex; flex-direction: column; border-top: 2px solid #96989b; border-radius: 11px 11px 0 0; border-bottom: 1px solid #b4b2ae; background: #c6c9ce; overflow: hidden; }

.titlebar { height: 43px; flex: none; display: flex; align-items: center; padding: 0 26px 3px 12px; background: #c6c9ce; }
.logo { width: 22px; height: 24px; }
.logo-f { font: bold 13px "Liberation Sans", sans-serif; fill: #e0cfc0; }
.logo-s { font: bold 6px "Liberation Sans", sans-serif; fill: #d8c8bc; }
.title { margin-left: 7px; font-family: "Open Sans", "Noto Sans CJK SC", sans-serif; font-size: 18px; letter-spacing: -.28px; color: #7d8085; white-space: nowrap; }
.winbtns { margin-left: auto; display: flex; gap: 54px; }
.winbtns svg { width: 16px; height: 16px; fill: none; stroke: #75787d; stroke-width: 1.4; }

.topbar { height: 48px; flex: none; display: flex; align-items: center; background: #a8abb0; }
.user { display: flex; align-items: center; width: 469px; padding-left: 16px; }
.name { margin: -2px 14px 0 16px; width: 70px; font-size: 21px; color: #5b5e63; white-space: nowrap; letter-spacing: -.3px; }
.panel-tools { display: flex; gap: 23px; width: 144px; }
.panel-tools svg { width: 25px; height: 24px; }
.quick { display: grid; width: 277px; grid-template-columns: 50px 29px 39px 50px 29px 29px 30px 21px; align-items: center; }
.doctab { align-self: flex-end; width: 1199px; height: 42px; border-radius: 6px 6px 0 0; background: #c6c9ce; display: flex; align-items: center; justify-content: flex-end; padding: 0 9px; }
.doc { display: flex; align-items: center; gap: 8px; margin-right: 539px; margin-top: 2px; width: 93px; font-size: 18px; letter-spacing: -.2px; white-space: nowrap; }
.newtab { align-self: flex-end; width: 41px; height: 42px; margin-left: 7px; padding-left: 1px; border-radius: 5px 5px 0 0; background: #9b9ea2; display: grid; place-items: center; }
.order { width: 104px; height: 36px; margin-left: 12px; border-radius: 5px; background: #cc8b22; color: #dcd8cf; font-size: 16px; line-height: 34px; text-align: center; }
.status { display: grid; grid-template-columns: 49px 30px 44px 49px 59px 36px; align-items: center; margin-left: 18px; }
.status svg { width: 24px; height: 24px; }
.status svg.avatar { width: 36px; height: 36px; }
.status span { font-size: 17px; }

.main { flex: 1; display: flex; min-height: 0; }
.side { width: 600px; flex: none; background: #bdc0c6; border-right: 1px solid #80838a; color: #54575c; font-size: 18px; padding: 20px 0 0 24px; }
.seg { display: flex; width: 522px; height: 42px; border: 1px solid #797c81; border-radius: 4px; overflow: hidden; line-height: 38px; text-align: center; }
.seg div { flex: 1; }
.seg .on { background: #cbced3; border-right: 1px solid #797c81; }
.actions { display: flex; align-items: center; margin: 13px 0 0 282px; }
.upload { width: 66px; height: 42px; border-radius: 4px; background: #577fac; color: #dfe3e8; font-weight: bold; line-height: 41px; text-align: center; }
.newfolder { width: 123px; height: 42px; margin: 0 12px 0 9px; border: 1px solid #797c81; border-radius: 4px; line-height: 43px; text-align: center; }
.crumb { display: flex; align-items: center; margin-top: 24px; height: 25px; width: 517px; padding-left: 1px; }
.crumb svg:nth-child(2) { margin: 0 8px 0 11px; }
.crumb b { color: #4b4e53; font-size: 18.300px; }
.crumb .globe { margin-left: auto; }
.empty { margin: 299px 0 0 141px; width: 236px; color: #848b93; line-height: 21.500px; text-align: center; white-space: nowrap; }

.work { flex: 1; display: flex; flex-direction: column; min-width: 0; }
.ribbon { height: 128px; flex: none; display: flex; padding-left: 18px; background: linear-gradient(#abaeb3, #abaeb3) 0 122px / 100% 1px no-repeat #c6c9ce; }
.design { width: 165px; height: 91px; margin-top: 16px; border: 1px solid #abaeb3; border-radius: 6px; display: flex; align-items: center; justify-content: center; gap: 9px; font-size: 17px; padding: 0 0 4px 2px; color: #2b2e32; }
.design svg { width: 9px; height: 7px; margin-top: 6px; }
.ribbon-body { margin-left: 4px; }
.tabs { display: flex; height: 36px; margin-left: 20px; font-size: 16px; line-height: 31px; text-align: center; }
.tabs span { width: 70px; margin-right: 32px; }
.tabs .wide { width: 104px; }
.tabs .active { color: #0a7db8; border-bottom: 4px solid #0a7db8; }
.groups { display: flex; margin-top: 4px; }
.group { height: 76px; flex: none; border-right: 1px solid #abaeb3; display: flex; flex-direction: column; align-items: center; }
.g6 { width: 404px; }
.g2 { width: 145.400px; }
.g1 { width: 88.600px; }
.last { border: 0; }
.icons { display: flex; gap: 16.600px; padding: 1px 0 0 2.500px; }
.icons svg { width: 48px; height: 48px; }
.label { display: flex; align-items: center; gap: 6px; margin-top: 7px; font-size: 16px; line-height: 20px; }
.label svg { width: 9px; height: 7px; margin-top: 2px; color: #25282c; }

.canvas { position: relative; flex: 1; background: #d0d4d9; overflow: hidden; }
.scene { width: 1960px; height: 1233px; }
.minor { fill: none; stroke: #c2c5ca; stroke-width: 1; }
.major { fill: none; stroke: #afb2b7; stroke-width: 1.200; }
.viewcube { position: absolute; left: 1850px; top: 19px; width: 90px; height: 110px; }
.cube-shadow { fill: #8d9096; opacity: .35; filter: blur(5px); }
.cz, .cx { font: bold 14px "Liberation Sans", sans-serif; }
.cz { fill: #7f80d8; }
.cx { fill: #d07a80; }
.cf { font-size: 19px; font-weight: 300; fill: #8b8e94; }

.pane { position: absolute; left: 6px; width: 449px; height: 37px; border: 1px solid #a5a8ad; border-bottom-width: 2px; background: #c6c9ce; display: flex; align-items: center; font-size: 16px; color: #5b5e63; }
.pane span { margin-top: -2px; }
.pane .add { margin-left: auto; margin-right: 16px; }
.browser { top: 6px; padding-left: 6px; }
.browser span { margin-left: 14px; }
.notes { top: 1189px; padding-left: 37px; }
.tree { position: absolute; left: 34px; top: 48px; color: #7d8085; }
.row { display: flex; align-items: center; gap: 16px; height: 36px; padding-left: 27px; }
.row.root { padding-left: 0; }
.row.root .cell + .cell { margin-left: -17px; }
.cell { height: 30px; width: 38px; padding-left: 4px; background: #c6c9ce; display: flex; align-items: center; }
.gearcell { color: #65686d; }

.navbar { position: absolute; left: 803px; top: 1187px; width: 356px; height: 36px; padding-left: 5px; background: #c6c9ce; display: grid; grid-template-columns: 32px 17px 39px 39px 38px 32px 18px 27px 19px 28px 19px 27px 10px; align-items: center; color: #25282c; }
.navbar svg { width: 24px; height: 24px; }
.navbar svg.c { width: 9px; height: 7px; }

.dialog { position: absolute; left: 112px; top: 15px; width: 1133px; height: 695px; border: 3px solid #f94a4a; }
.sheet { position: absolute; left: 3px; top: 7px; width: 1123px; height: 679px; background: #fff; box-shadow: 0 0 0 1px #d9dbde; color: #6e6e6e; }
.dhead { height: 129px; border-bottom: 2px solid #d0d0d0; display: flex; justify-content: space-between; align-items: center; padding: 2px 43px 0 46px; }
.dhead h1 { margin: -2px 0 0; font-size: 35px; font-weight: 300; line-height: 50px; }
.dbody { padding: 29px 44px 0 45px; }
.dbody label { display: block; height: 33px; font-size: 17.500px; line-height: 30px; }
.input { height: 52px; flex: 1; border: 1px solid #ccc; border-radius: 4px; padding-left: 18px; font-size: 18px; line-height: 51px; }
.input + label { margin-top: 36px; height: 38px; }
.big { font-size: 19px; }
.line { display: flex; gap: 18px; }
.drop { width: 52px; height: 52px; padding-bottom: 2px; border: 1px solid #999; border-radius: 4px; display: grid; place-items: center; background: #fafafa; }
.dfoot { display: flex; justify-content: flex-end; gap: 18px; padding-right: 45px; margin-top: 194px; }
.btn { width: 87px; height: 50px; border: 1px solid #999; border-radius: 4px; background: #fafafa; font-size: 17.500px; line-height: 50px; text-align: center; }
.primary { background: #00a5e5; border-color: #00a5e5; color: #fff; }
.grip { position: absolute; right: 1px; bottom: 1px; }

.timeline { height: 73px; flex: none; border-top: 1px solid #abaeb3; background: #c6c9ce; display: flex; align-items: center; padding: 0 20px 0 16px; }
.play { display: flex; gap: 17.500px; }
.play svg { width: 20px; height: 24px; fill: #53565b; }
.history { margin: 2px 0 0 32px; }
.set { margin-left: auto; }
```
